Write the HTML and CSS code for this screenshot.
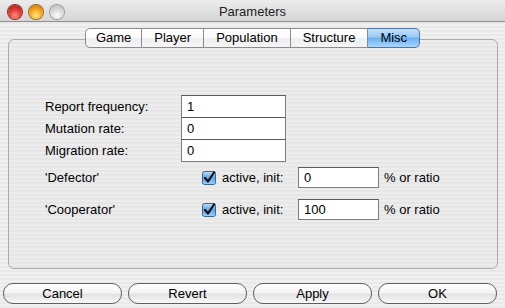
FILE: index.html
```html
<!DOCTYPE html>
<html lang="en">
<head>
    <meta charset="UTF-8">
    <title>Parameters</title>
    <link rel="stylesheet" href="styles.css">
</head>
<body>
    <div class="window">
        <div class="titlebar">
            <div class="lights">
                <span class="light red"></span>
                <span class="light orange"></span>
                <span class="light grey"></span>
            </div>
            <div class="title">Parameters</div>
            <div></div>
        </div>

        <div class="tabs">
            <span class="tab first">Game</span>
            <span class="tab">Player</span>
            <span class="tab">Population</span>
            <span class="tab">Structure</span>
            <span class="tab last selected">Misc</span>
        </div>

        <div class="panel">
            <div class="fields">
                <span class="label">Report frequency:</span>
                <input class="text" type="text" value="1">
                <span class="label">Mutation rate:</span>
                <input class="text" type="text" value="0">
                <span class="label">Migration rate:</span>
                <input class="text" type="text" value="0">
            </div>

            <div class="players">
                <div class="player">
                    <span class="name">'Defector'</span>
                    <svg class="check" width="14" height="14" viewBox="0 0 14 14">
                        <defs>
                            <linearGradient id="cb" x1="0" y1="0" x2="0" y2="1">
                                <stop offset="0" stop-color="#b9dcfb"/>
                                <stop offset="0.5" stop-color="#5da6ea"/>
                                <stop offset="1" stop-color="#9fd0fa"/>
                            </linearGradient>
                        </defs>
                        <rect x="0.5" y="0.5" width="13" height="13" rx="2" fill="url(#cb)" stroke="#40658f"/>
                        <path d="M3 7 L6 10.5 L12 1.5" fill="none" stroke="#111" stroke-width="2.2" stroke-linecap="round" stroke-linejoin="round"/>
                    </svg>
                    <span class="init">active, init:</span>
                    <input class="text small" type="text" value="0">
                    <span class="unit">% or ratio</span>
                </div>
                <div class="player">
                    <span class="name">'Cooperator'</span>
                    <svg class="check" width="14" height="14" viewBox="0 0 14 14">
                        <rect x="0.5" y="0.5" width="13" height="13" rx="2" fill="url(#cb)" stroke="#40658f"/>
                        <path d="M3 7 L6 10.5 L12 1.5" fill="none" stroke="#111" stroke-width="2.2" stroke-linecap="round" stroke-linejoin="round"/>
                    </svg>
                    <span class="init">active, init:</span>
                    <input class="text small" type="text" value="100">
                    <span class="unit">% or ratio</span>
                </div>
            </div>
        </div>

        <div class="buttons">
            <button>Cancel</button>
            <button>Revert</button>
            <button>Apply</button>
            <button>OK</button>
        </div>
    </div>
</body>
</html>
```

FILE: styles.css
```css
* {
    margin: 0;
    padding: 0;
    box-sizing: border-box;
}

body {
    font-family: "Liberation Sans", Arial, sans-serif;
    font-size: 13px;
    color: #000;
}

.window {
    width: 505px;
    height: 308px;
    overflow: hidden;
    /* aqua pinstripes */
    background: repeating-linear-gradient(#f0f0f0 0 2px, #e9e9e9 2px 4px);
}

/* title bar */
.titlebar {
    display: grid;
    grid-template-columns: 1fr auto 1fr;
    align-items: center;
    height: 22px;
    border-bottom: 1px solid #8e8e8e;
    background: linear-gradient(#ececec, #d6d6d6);
}

.title {
    color: #222;
    padding-top: 1px;
}

.lights {
    display: flex;
    gap: 7px;
    padding: 3px 0 0 8px;
}

.light {
    width: 14px;
    height: 14px;
    border-radius: 50%;
}

.red {
    background: radial-gradient(circle at 50% 75%, #ff8a80 0, #d8342c 55%, #9c1d17 100%);
    box-shadow: 0 0 0 1px #8a2a26;
}

.orange {
    background: radial-gradient(circle at 50% 75%, #ffe680 0, #f0a018 55%, #b56a08 100%);
    box-shadow: 0 0 0 1px #a0661c;
}

.grey {
    background: radial-gradient(circle at 50% 75%, #fafafa 0, #d6d6d6 55%, #b0b0b0 100%);
    box-shadow: 0 0 0 1px #9c9c9c;
}

/* tabs */
.tabs {
    position: relative;
    z-index: 1;
    display: flex;
    justify-content: center;
    margin-top: 6px;
    margin-bottom: -9px;
}

.tab {
    height: 20px;
    line-height: 18px;
    padding: 0 12px;
    border: 1px solid #8c8c8c;
    border-left: none;
    background: linear-gradient(#ffffff, #fbfbfb 50%, #eeeeee 51%, #f6f6f6);
}

.tab.first {
    border-left: 1px solid #8c8c8c;
    border-radius: 5px 0 0 5px;
    padding: 0 10px;
}

.tab.last {
    border-radius: 0 5px 5px 0;
}

.tab.selected {
    border-color: #4f77a6;
    background: linear-gradient(#c5e2fc, #94c8f6 45%, #6db0f0 52%, #a9d6fc);
}

/* tab panel */
.panel {
    height: 230px;
    margin: 0 7px 0 8px;
    padding: 55px 0 0 36px;
    border: 1px solid #ababab;
    border-radius: 6px;
    background: repeating-linear-gradient(#ececec 0 2px, #e6e6e6 2px 4px);
}

.fields {
    display: grid;
    grid-template-columns: 136px 105px;
    align-items: center;
}

.text {
    height: 23px;
    margin-bottom: -1px;
    padding: 0 5px;
    border: 1px solid #7d7d7d;
    border-top-color: #5a5a5a;
    font: inherit;
    background: #fff;
    outline: none;
}

.players {
    display: flex;
    flex-direction: column;
    gap: 11px;
    margin-top: 6px;
}

.player {
    display: flex;
    align-items: center;
    height: 21px;
}

.name {
    width: 157px;
}

.check {
    margin-right: 6px;
}

.init {
    width: 76px;
}

.text.small {
    width: 81px;
    height: 21px;
    margin: 0 5px 0 0;
}

/* bottom buttons */
.buttons {
    display: grid;
    grid-template-columns: repeat(4, 1fr);
    gap: 6px;
    margin: 14px 8px 0 3px;
}

.buttons button {
    height: 21px;
    border: 1px solid #5f5f5f;
    border-radius: 10px;
    font: inherit;
    color: #000;
    background: linear-gradient(#ffffff, #f4f4f4 45%, #e2e2e2 55%, #f8f8f8);
}
```
